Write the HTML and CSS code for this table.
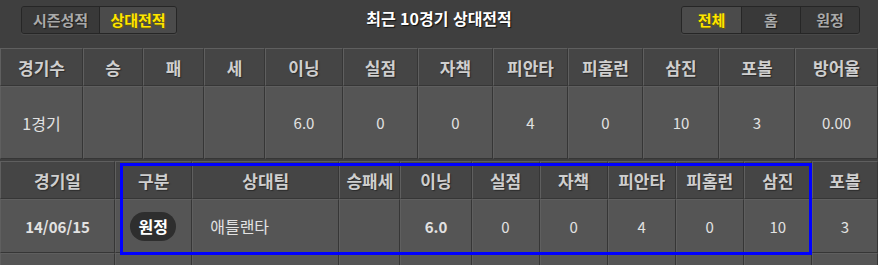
FILE: index.html
```html
<!DOCTYPE html>
<html lang="ko">
<head>
    <meta charset="UTF-8">
    <meta name="viewport" content="width=device-width, initial-scale=1.0">
    <title>최근 10경기 상대전적</title>
    <link rel="stylesheet" href="styles.css">
</head>
<body>

    <div class="topbar">
        <div class="tabs tabs-left">
            <button class="tab">시즌성적</button>
            <button class="tab active">상대전적</button>
        </div>
        <h1 class="title">최근 10경기 상대전적</h1>
        <div class="tabs tabs-right">
            <button class="tab active">전체</button>
            <button class="tab">홈</button>
            <button class="tab">원정</button>
        </div>
    </div>

    <table class="stats summary">
        <colgroup>
            <col style="width:83px"><col style="width:60px"><col style="width:61px"><col style="width:61px">
            <col style="width:78px"><col style="width:75px"><col style="width:75px"><col style="width:75px">
            <col style="width:75px"><col style="width:76px"><col style="width:76px"><col style="width:83px">
        </colgroup>
        <tr>
            <th>경기수</th><th>승</th><th>패</th><th>세</th><th>이닝</th><th>실점</th>
            <th>자책</th><th>피안타</th><th>피홈런</th><th>삼진</th><th>포볼</th><th>방어율</th>
        </tr>
        <tr>
            <td>1경기</td><td></td><td></td><td></td><td>6.0</td><td>0</td>
            <td>0</td><td>4</td><td>0</td><td>10</td><td>3</td><td>0.00</td>
        </tr>
    </table>

    <div class="games-wrap">
        <table class="stats games">
            <colgroup>
                <col style="width:115px"><col style="width:77px"><col style="width:147px"><col style="width:61px">
                <col style="width:71px"><col style="width:68px"><col style="width:68px"><col style="width:68px">
                <col style="width:68px"><col style="width:68px"><col style="width:66px">
            </colgroup>
            <tr>
                <th>경기일</th><th>구분</th><th>상대팀</th><th>승패세</th><th>이닝</th><th>실점</th>
                <th>자책</th><th>피안타</th><th>피홈런</th><th>삼진</th><th>포볼</th>
            </tr>
            <tr>
                <td class="bold">14/06/15</td>
                <td><span class="pill">원정</span></td>
                <td class="team">애틀랜타</td>
                <td></td>
                <td class="bold">6.0</td>
                <td>0</td><td>0</td><td>4</td><td>0</td><td>10</td><td>3</td>
            </tr>
            <tr class="next">
                <td></td><td></td><td></td><td></td><td></td><td></td>
                <td></td><td></td><td></td><td></td><td></td>
            </tr>
        </table>
        <div class="highlight"></div>
    </div>

</body>
</html>
```

FILE: styles.css
```css
body {
    margin: 0;
    font-family: "Noto Sans CJK KR", "Noto Sans", sans-serif;
    background-color: #3f3f3f;
    color: #e0e0e0;
    overflow: hidden;
}

.topbar {
    height: 48px;
    display: flex;
    align-items: flex-start;
    justify-content: space-between;
    padding: 6px 18px 0 21px;
    box-sizing: border-box;
    position: relative;
}

.title {
    margin: 0;
    position: absolute;
    left: 0;
    right: 0;
    top: 6px;
    text-align: center;
    font-size: 16px;
    line-height: 24px;
    font-weight: bold;
    color: #fff;
    text-shadow: 1px 1px 1px #111;
    pointer-events: none;
}

.tabs {
    display: flex;
    border: 1px solid #262626;
    border-radius: 3px;
    background-color: #393939;
    box-shadow: 0 1px 1px #4a4a4a;
    position: relative;
    z-index: 1;
}

.tab {
    font-family: inherit;
    font-size: 15px;
    font-weight: bold;
    height: 26px;
    line-height: 26px;
    padding: 0;
    border: none;
    border-left: 1px solid #262626;
    background-color: #393939;
    color: #a9a9a9;
    text-shadow: 1px 1px 1px #1e1e1e;
    cursor: pointer;
}

.tab:first-child {
    border-left: none;
    border-radius: 2px 0 0 2px;
}

.tab:last-child {
    border-radius: 0 2px 2px 0;
}

.tab.active {
    background-color: #4b4b4b;
    color: #ffe600;
    text-shadow: 1px 1px 0 #6a5a00;
}

.tabs-left .tab {
    width: 77px;
}

.tabs-right .tab {
    width: 59px;
}

.stats {
    width: 878px;
    table-layout: fixed;
    border-collapse: separate;
    border-spacing: 0;
}

.stats th,
.stats td {
    padding: 0;
    text-align: center;
    border-top: 1px solid #5f5f5f;
    border-left: 1px solid #5f5f5f;
    border-right: 1px solid #363636;
    border-bottom: 1px solid #363636;
    white-space: nowrap;
}

.stats th {
    height: 36px;
    background-color: #454545;
    color: #cfcfcf;
    font-size: 17px;
    font-weight: bold;
    text-shadow: 1px 1px 1px #2a2a2a;
}

.stats td {
    background-color: #555555;
    font-size: 15px;
    color: #e2e2e2;
}

.summary td {
    height: 71px;
}

.summary td:first-child {
    font-size: 16px;
}

.games-wrap {
    position: relative;
    margin-top: 2px;
}

.games td {
    height: 52px;
}

.games tr.next td {
    height: 30px;
}

.games td.bold {
    font-weight: bold;
}

.games td.team {
    text-align: left;
    padding-left: 17px;
    font-size: 16px;
}

.pill {
    display: inline-block;
    background-color: #2e2e2e;
    color: #fff;
    font-weight: bold;
    font-size: 16px;
    line-height: 29px;
    padding: 0 8px;
    border-radius: 15px;
    margin-right: 1px;
}

/* selection frame drawn over the game row */
.highlight {
    position: absolute;
    left: 120px;
    top: 2px;
    width: 686px;
    height: 86px;
    border: 3px solid #0000ff;
    pointer-events: none;
}
```
